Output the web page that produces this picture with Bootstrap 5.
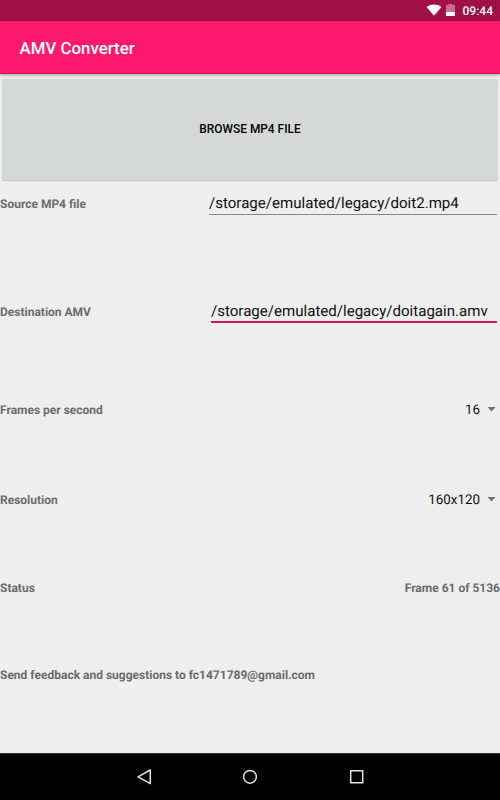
<!DOCTYPE html>
<html lang="en">
<head>
<meta charset="utf-8">
<meta name="viewport" content="width=device-width, initial-scale=1">
<title>AMV Converter</title>
<link href="https://cdn.jsdelivr.net/npm/bootstrap@5.3.0/dist/css/bootstrap.min.css" rel="stylesheet">
<style>
body{font-family:Roboto,"Liberation Sans",sans-serif;background:#eee;height:800px;line-height:1;overflow:hidden;text-rendering:geometricPrecision}
.status-bar{height:21px;background:#a01045;font-size:12px;font-weight:500;padding:1px 7px 0 0}
.title-bar{height:53px;background:#fc186b;border-bottom:1px solid #e60f5b;padding:4px 0 0 19.5px!important;box-shadow:0 1px 3px rgba(0,0,0,.35)}
.title-bar h1{font-size:16.85px;font-weight:500;line-height:1.1}
.browse{height:101px;margin:5px 2px 0;background:#d6d8d7!important;border:0;border-radius:2px;font-size:11.9px;font-weight:500;color:#000;box-shadow:0 1px 1px rgba(0,0,0,.2)}
.form-line{height:46px;font-size:12px;font-weight:700;color:#6b6b6b;white-space:nowrap}
.line-source{margin-top:1px;margin-bottom:62px}
.line-dest{margin-bottom:52px}
.line-fps{margin-bottom:44px}
.line-res{margin-bottom:42px}
.line-status{margin-bottom:41px}
.path-field{height:23px;font-size:15.07px;font-weight:400;color:#111;margin-right:3px;padding-top:4px;border-bottom:1px solid #858585}
.field-source{width:288px;margin-bottom:1px}
.field-dest{width:286px;padding-top:4px;margin-bottom:2px;border-bottom:2px solid #dc1554}
.picker{font-size:13.4px;font-weight:400;color:#111;padding-right:4px;gap:7px}
.picker span{padding-top:1px}
.picker svg{margin-bottom:1px}
.nav-keys{height:47px;background:#000;border-top:1px solid #333}
svg{display:block}
</style>
</head>
<body class="d-flex flex-column">
<div class="status-bar d-flex align-items-center justify-content-end text-white flex-shrink-0">
  <svg width="16" height="14" viewBox="0 0 16 14"><path d="M.5 3C5 -.3 11 -.3 15.500 3L8 11.8Z" fill="#fff"/></svg>
  <svg class="ms-1" width="9" height="14" viewBox="0 0 9 14"><path d="M0 1H2.500V0H6.500V1H9V8H0Z" fill="#c66f91"/><path d="M0 8H9V12H0Z" fill="#fff"/></svg>
  <span class="ms-1 ps-1">09:44</span>
</div>
<header class="title-bar navbar flex-shrink-0"><h1 class="m-0 text-white">AMV Converter</h1></header>
<button type="button" class="browse btn flex-shrink-0">BROWSE MP4 FILE</button>
<main class="flex-grow-1">
  <div class="form-line line-source d-flex align-items-center justify-content-between"><span>Source MP4 file</span><div class="path-field field-source">/storage/emulated/legacy/doit2.mp4</div></div>
  <div class="form-line line-dest d-flex align-items-center justify-content-between"><span>Destination AMV</span><div class="path-field field-dest">/storage/emulated/legacy/doitagain.amv</div></div>
  <div class="form-line line-fps d-flex align-items-center justify-content-between"><span>Frames per second</span><div class="picker d-flex align-items-center"><span>16</span><svg width="9" height="5" viewBox="0 0 9 5"><path d="M.5 0H8.500L4.500 4.500Z" fill="#707070"/></svg></div></div>
  <div class="form-line line-res d-flex align-items-center justify-content-between"><span>Resolution</span><div class="picker d-flex align-items-center"><span>160x120</span><svg width="9" height="5" viewBox="0 0 9 5"><path d="M.5 0H8.500L4.500 4.500Z" fill="#707070"/></svg></div></div>
  <div class="form-line line-status d-flex align-items-center justify-content-between"><span>Status</span><span>Frame 61 of 5136</span></div>
  <div class="form-line d-flex align-items-center"><span>Send feedback and suggestions to fc1471789@gmail.com</span></div>
</main>
<footer class="nav-keys d-flex align-items-center justify-content-center flex-shrink-0">
  <svg width="260" height="20" viewBox="0 0 260 20" fill="none" stroke="#e4e4e4" stroke-width="1.500"><path d="M30.300 3L18 9.800L30.300 16.600Z" stroke-linejoin="round"/><circle cx="130" cy="9.800" r="6.400"/><path d="M230.700 3.700H242.700V15.700H230.700Z"/></svg>
</footer>
<script src="https://cdn.jsdelivr.net/npm/bootstrap@5.3.0/dist/js/bootstrap.bundle.min.js"></script>
</body>
</html>
